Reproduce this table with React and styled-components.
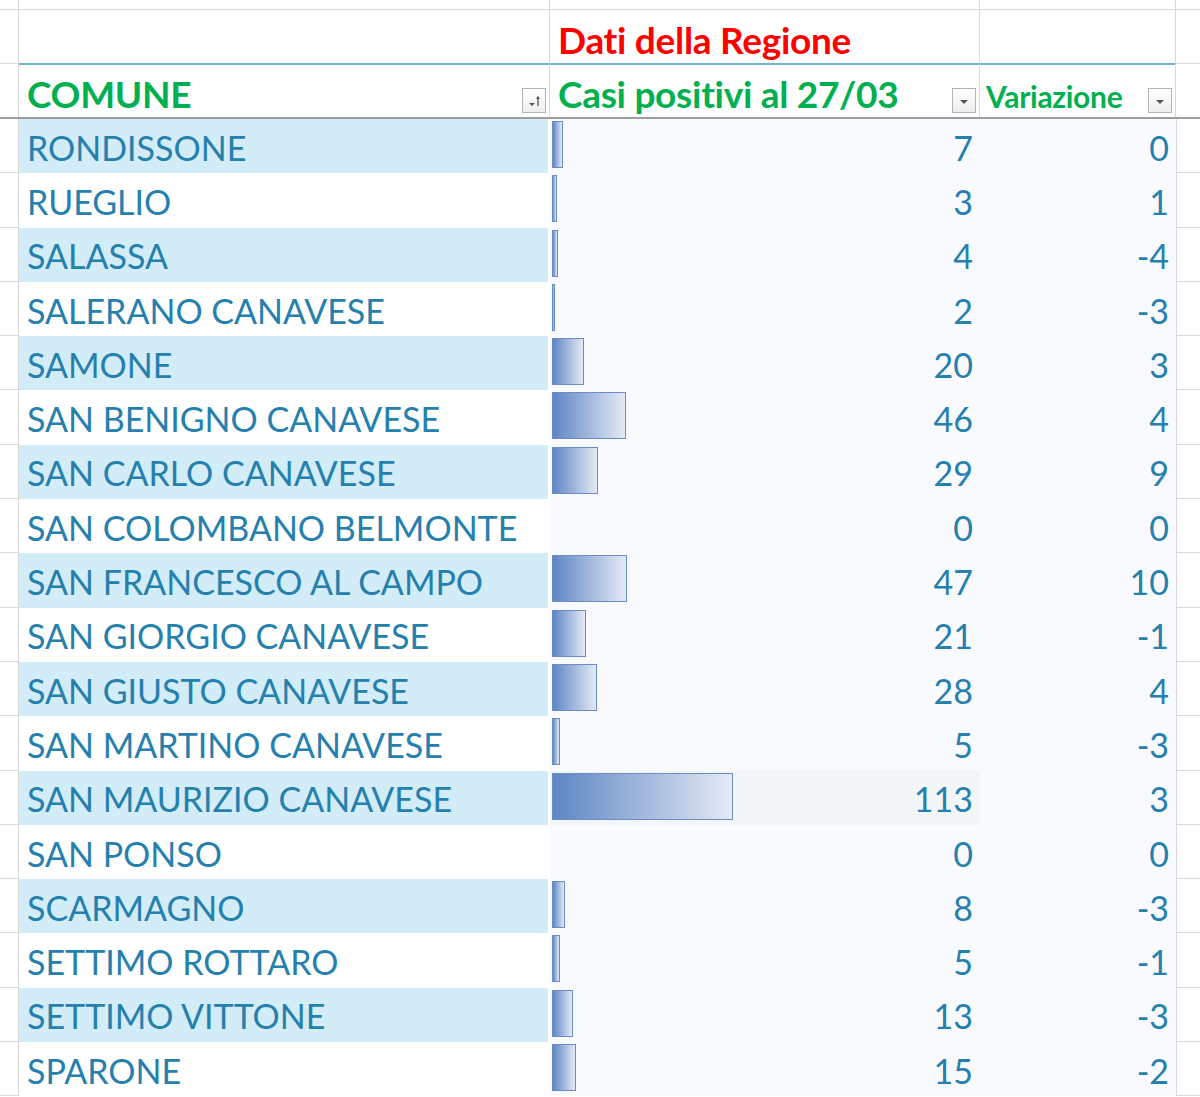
import React from "react";
import styled, { createGlobalStyle } from "styled-components";

const GlobalStyle = createGlobalStyle`
  html, body {
    margin: 0;
    padding: 0;
    background: #ffffff;
    overflow: hidden;
  }
  body {
    font-family: "Lato", "Open Sans", sans-serif;
  }
`;

const COLS = "19px 531px 430px 196px 24px";
const GRID = "#d9d9d9";
const TEXT = "#2680ad";

const Sheet = styled.div`
  width: 1200px;
  height: 1097px;
  display: flex;
  flex-direction: column;
  background: #fff;
`;

const Row = styled.div`
  display: grid;
  grid-template-columns: ${COLS};
  height: ${(p) => p.h}px;
  flex: none;
  border-bottom: ${(p) => p.line || `1px solid ${GRID}`};
  box-sizing: border-box;
`;

const Gutter = styled.div`
  border-right: 1px solid ${GRID};
  border-bottom: ${(p) => (p.lined ? `1px solid ${GRID}` : "none")};
`;

const Cell = styled.div`
  display: flex;
  align-items: flex-end;
  padding: 0 8px 0 8px;
  border-right: ${(p) => (p.edge ? `1px solid ${GRID}` : "none")};
  border-bottom: ${(p) => p.under || "none"};
  margin-bottom: ${(p) => (p.under ? "-1px" : "0")};
  position: relative;
  box-sizing: border-box;
  overflow: hidden;
`;

const Title = styled.span`
  font-weight: 700;
  font-size: ${(p) => p.size || 37}px;
  color: ${(p) => p.color};
  line-height: 1;
  padding-bottom: ${(p) => p.pb || 5}px;
  letter-spacing: -0.3px;
  white-space: nowrap;
`;

const FilterBtn = styled.div`
  position: absolute;
  right: 3px;
  bottom: 4px;
  width: 24px;
  height: 25px;
  box-sizing: border-box;
  border: 1px solid #b4b4b4;
  background: linear-gradient(#ffffff, #eeeeee);
  display: flex;
  align-items: center;
  justify-content: center;
`;

const NameCell = styled.div`
  display: flex;
  align-items: center;
  padding: 2px 0 0 8px;
  margin-right: 2px;
  background: ${(p) => (p.band ? "#d2ecf8" : "#ffffff")};
  color: ${TEXT};
  font-size: 34px;
  white-space: nowrap;
`;

const ValueCell = styled.div`
  position: relative;
  display: flex;
  align-items: center;
  justify-content: flex-end;
  padding: 2px 7px 0 0;
  background: ${(p) => (p.shade ? "#f3f6f8" : "#f9fafe")};
  color: ${TEXT};
  font-size: 34px;
`;

const Bar = styled.div`
  position: absolute;
  left: 2px;
  top: 2px;
  height: 47px;
  box-sizing: border-box;
  border: 1px solid #6b8cc6;
  background: linear-gradient(to right, #5e86c4, #e4eaf5);
`;

const Number = styled.span`
  position: relative;
`;

const Edge = styled.div`
  border-left: 1px solid ${GRID};
  border-bottom: ${(p) => (p.lined ? `1px solid ${GRID}` : "none")};
`;

const FilterIcon = ({ sort }) => (
  <svg width="20" height="20" viewBox="0 0 20 20">
    {sort ? (
      <>
        <polygon points="5,12 11,12 8,15" fill="#555" />
        <line x1="14" y1="6" x2="14" y2="15" stroke="#555" strokeWidth="1.3" />
        <polygon points="12,8 16,8 14,5" fill="#555" />
      </>
    ) : (
      <polygon points="6,9 14,9 10,13" fill="#555" />
    )}
  </svg>
);

const data = [
  ["RONDISSONE", 7, 0],
  ["RUEGLIO", 3, 1],
  ["SALASSA", 4, -4],
  ["SALERANO CANAVESE", 2, -3],
  ["SAMONE", 20, 3],
  ["SAN BENIGNO CANAVESE", 46, 4],
  ["SAN CARLO CANAVESE", 29, 9],
  ["SAN COLOMBANO BELMONTE", 0, 0],
  ["SAN FRANCESCO AL CAMPO", 47, 10],
  ["SAN GIORGIO CANAVESE", 21, -1],
  ["SAN GIUSTO CANAVESE", 28, 4],
  ["SAN MARTINO CANAVESE", 5, -3],
  ["SAN MAURIZIO CANAVESE", 113, 3],
  ["SAN PONSO", 0, 0],
  ["SCARMAGNO", 8, -3],
  ["SETTIMO ROTTARO", 5, -1],
  ["SETTIMO VITTONE", 13, -3],
  ["SPARONE", 15, -2],
];

export default function App() {
  return (
    <Sheet>
      <GlobalStyle />
      <Row h={10}>
        <Gutter />
        <Cell edge />
        <Cell edge />
        <Cell edge />
        <div />
      </Row>
      <Row h={54} line="none">
        <Gutter lined />
        <Cell edge under="2px solid #6fb3cf" />
        <Cell edge under="2px solid #6fb3cf">
          <Title color="#ff0000">Dati della Regione</Title>
        </Cell>
        <Cell edge under="2px solid #6fb3cf" />
        <Edge lined style={{ borderLeft: "none" }} />
      </Row>
      <Row h={55} line="2px solid #9e9e9e">
        <Gutter />
        <Cell edge>
          <Title color="#00b050">COMUNE</Title>
          <FilterBtn>
            <FilterIcon sort />
          </FilterBtn>
        </Cell>
        <Cell edge>
          <Title color="#00b050">Casi positivi al 27/03</Title>
          <FilterBtn>
            <FilterIcon />
          </FilterBtn>
        </Cell>
        <Cell edge style={{ paddingLeft: 6 }}>
          <Title color="#00b050" size={30} pb={6}>
            Variazione
          </Title>
          <FilterBtn>
            <FilterIcon />
          </FilterBtn>
        </Cell>
        <div />
      </Row>
      {data.map(([name, cases, delta], i) => (
        <Row key={name} h={54.3} line="none">
          <Gutter lined />
          <NameCell band={i % 2 === 0}>{name}</NameCell>
          <ValueCell shade={cases === 113}>
            {cases > 0 && <Bar style={{ width: cases * 1.6 }} />}
            <Number>{cases}</Number>
          </ValueCell>
          <ValueCell>{delta}</ValueCell>
          <Edge lined />
        </Row>
      ))}
    </Sheet>
  );
}
